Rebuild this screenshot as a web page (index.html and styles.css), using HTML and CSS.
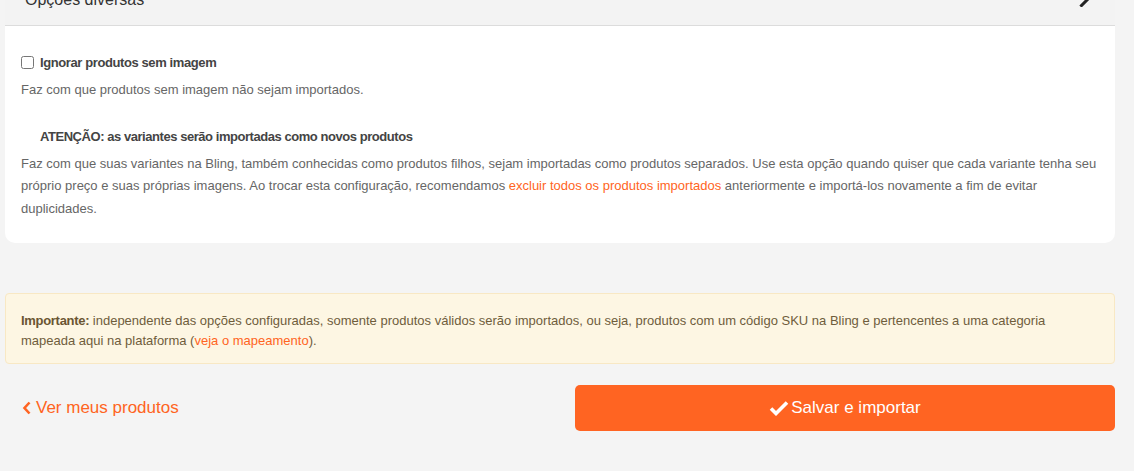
FILE: index.html
```html
<!DOCTYPE html>
<html lang="pt-BR">
<head>
<meta charset="utf-8">
<link rel="stylesheet" href="styles.css">
<title>Opções diversas</title>
</head>
<body>
<div class="page">
  <section class="card">
    <header class="card-header">
      <span class="card-title">Opções diversas</span>
      <svg class="chev" width="12" height="16" viewBox="0 0 12 16"><path d="M2.5 1.5 L9 8 L2.5 14.5" fill="none" stroke="#222" stroke-width="3" stroke-linecap="square"/></svg>
    </header>
    <div class="card-body">
      <label class="check-row">
        <input type="checkbox" class="check">
        <span class="check-label">Ignorar produtos sem imagem</span>
      </label>
      <p class="desc">Faz com que produtos sem imagem não sejam importados.</p>

      <p class="warn-title">ATENÇÃO: as variantes serão importadas como novos produtos</p>
      <p class="desc long">Faz com que suas variantes na Bling, também conhecidas como produtos filhos, sejam importadas como produtos separados. Use esta opção quando quiser que cada variante tenha seu próprio preço e suas próprias imagens. Ao trocar esta configuração, recomendamos <a href="#" class="link">excluir todos os produtos importados</a> anteriormente e importá-los novamente a fim de evitar duplicidades.</p>
    </div>
  </section>

  <div class="alert">
    <strong>Importante:</strong> independente das opções configuradas, somente produtos válidos serão importados, ou seja, produtos com um código SKU na Bling e pertencentes a uma categoria mapeada aqui na plataforma (<a href="#" class="link">veja o mapeamento</a>).
  </div>

  <div class="actions">
    <a href="#" class="back">
      <svg width="10" height="14" viewBox="0 0 10 14"><path d="M7.5 1.5 L2.5 7 L7.5 12.5" fill="none" stroke="#ff6422" stroke-width="2.6"/></svg>
      Ver meus produtos
    </a>
    <button class="save">
      <svg width="20" height="16" viewBox="0 0 20 16"><path d="M2 8.5 L7 13.5 L18 2.5" fill="none" stroke="#fff" stroke-width="3.6"/></svg>
      Salvar e importar
    </button>
  </div>
</div>
</body>
</html>
```
FILE: styles.css
```css
html, body {
  margin: 0;
  background: #f4f4f4;
}
body {
  font-family: "Liberation Sans", Arial, sans-serif;
  color: #555;
  overflow: hidden;
}
.page {
  padding: 0 19px 0 5px;
}
.card {
  background: #fff;
  border-radius: 0 0 10px 10px;
  margin-top: -24px;
}
.card-header {
  background: #f3f3f3;
  border-bottom: 1px solid #dcdcdc;
  display: flex;
  align-items: center;
  justify-content: space-between;
  padding: 12px 24px 13px 20px;
  height: 24px;
}
.card-title {
  font-size: 16px;
  color: #333;
  line-height: 24px;
}
.chev { margin-top: -2px; }
.card-body {
  padding: 22px 16px 23px;
}
.check-row {
  display: flex;
  align-items: center;
  gap: 6px;
  height: 28px;
}
.check {
  margin: 0;
  width: 13px;
  height: 13px;
}
.check-label {
  font-weight: bold;
  font-size: 13px;
  color: #444;
  letter-spacing: -0.4px;
}
.desc {
  margin: 0;
  font-size: 13px;
  line-height: 22.5px;
  color: #666;
}
.check-row + .desc { margin-top: 3px; }
.warn-title {
  margin: 24px 0 5px 19px;
  font-size: 13px;
  font-weight: bold;
  color: #444;
  line-height: 22px;
  letter-spacing: -0.45px;
}
.link {
  color: #ff6422;
  text-decoration: none;
}
.alert {
  margin-top: 50px;
  background: #fdf6e3;
  border: 1px solid #f8e8c4;
  border-radius: 4px;
  padding: 17px 15px 12px;
  font-size: 13px;
  line-height: 20px;
  color: #6f5d3c;
}
.alert strong { color: #6a5532; letter-spacing: -0.3px; }
.actions {
  margin-top: 21px;
  display: flex;
  align-items: center;
}
.back {
  flex: 1;
  padding-left: 17px;
  color: #ff6422;
  text-decoration: none;
  font-size: 17px;
  display: flex;
  align-items: center;
  gap: 4px;
}
.save {
  width: 540px;
  height: 46px;
  border: none;
  border-radius: 5px;
  background: #ff6422;
  color: #fff;
  font-family: inherit;
  font-size: 17px;
  display: flex;
  align-items: center;
  justify-content: center;
  gap: 2px;
}
```
